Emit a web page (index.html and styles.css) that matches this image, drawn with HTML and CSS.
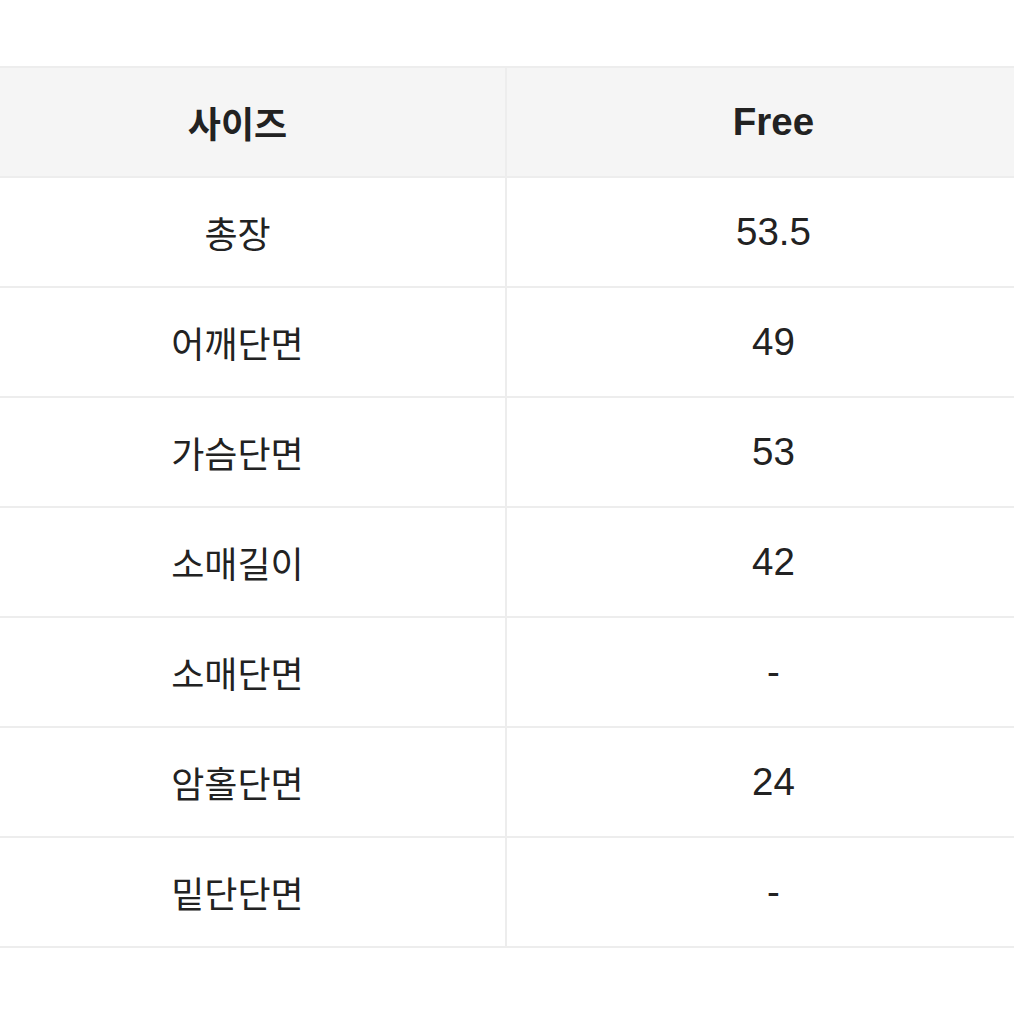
FILE: index.html
```html
<!DOCTYPE html>
<html lang="ko">
<head>
<meta charset="utf-8">
<link rel="stylesheet" href="styles.css">
</head>
<body>
<div class="wrap">
<table class="size-table">
  <thead>
    <tr><th>사이즈</th><th class="val">Free</th></tr>
  </thead>
  <tbody>
    <tr><td>총장</td><td class="val">53.5</td></tr>
    <tr><td>어깨단면</td><td class="val">49</td></tr>
    <tr><td>가슴단면</td><td class="val">53</td></tr>
    <tr><td>소매길이</td><td class="val">42</td></tr>
    <tr><td>소매단면</td><td class="val">-</td></tr>
    <tr><td>암홀단면</td><td class="val">24</td></tr>
    <tr><td>밑단단면</td><td class="val">-</td></tr>
  </tbody>
</table>
</div>
</body>
</html>
```
FILE: styles.css
```css
html, body {
  margin: 0;
  padding: 0;
  background: #ffffff;
  overflow: hidden;
}
.wrap {
  width: 1014px;
  height: 1014px;
  overflow: hidden;
  padding-top: 66px;
  box-sizing: border-box;
}
.size-table {
  margin-left: -32px;
  width: 1074px;
  border-collapse: collapse;
  table-layout: fixed;
  font-family: "Liberation Sans", "Noto Sans CJK KR", sans-serif;
  color: #222222;
  font-size: 36px;
}
.size-table th,
.size-table td {
  height: 108px;
  padding: 0;
  text-align: center;
  vertical-align: middle;
  border: 2px solid #ededed;
  font-weight: 400;
}
.size-table th {
  background: #f5f5f5;
  font-weight: 700;
}
.size-table th:first-child,
.size-table td:first-child {
  width: 535px;
}
.size-table .val {
  font-size: 38.5px;
}
```
